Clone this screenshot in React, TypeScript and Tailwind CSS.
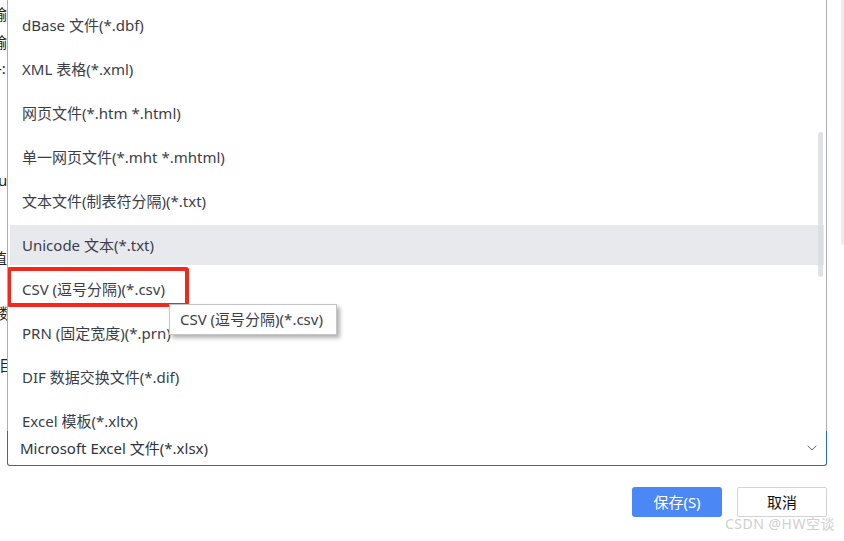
import { ChevronDown } from 'lucide-react';

const fileTypes = [
  'dBase 文件(*.dbf)',
  'XML 表格(*.xml)',
  '网页文件(*.htm *.html)',
  '单一网页文件(*.mht *.mhtml)',
  '文本文件(制表符分隔)(*.txt)',
  'Unicode 文本(*.txt)',
  'CSV (逗号分隔)(*.csv)',
  'PRN (固定宽度)(*.prn)',
  'DIF 数据交换文件(*.dif)',
  'Excel 模板(*.xltx)',
];

const font = "font-['Noto_Sans','Noto_Sans_CJK_SC',sans-serif]";

export default function App() {
  const hovered = 5;
  const selected = 6;

  return (
    <div className={`relative flex h-[541px] w-[844px] overflow-hidden bg-white ${font}`}>
      {/* dialog text peeking out behind the dropdown */}
      <div className="flex w-[7px] shrink-0 flex-col overflow-hidden text-[15px] leading-[20px] text-[#222]">
        <div className="ml-[-8px] mt-[4px] whitespace-nowrap">输</div>
        <div className="ml-[-8px] mt-[8px] whitespace-nowrap">输</div>
        <div className="ml-[-3px] mt-[6px] whitespace-nowrap">-:</div>
        <div className="ml-[-2px] mt-[92px] whitespace-nowrap">u</div>
        <div className="ml-[-8px] mt-[58px] whitespace-nowrap">值</div>
        <div className="ml-[-1px] mt-[35px] whitespace-nowrap">数</div>
        <div className="ml-[-1px] mt-[32px] whitespace-nowrap">目</div>
      </div>

      <div className="flex w-[820px] shrink-0 flex-col">
        {/* dropdown list */}
        <div className="relative h-[431px] overflow-hidden border-x border-[#aeabbb] px-[2px]">
          <div className="flex flex-col gap-[4px] pt-[5px]">
            {fileTypes.map((t, i) => (
              <div
                key={t}
                className={`relative flex h-[40px] shrink-0 items-center pl-[12px] text-[15px] text-[#3a3e4b] ${
                  i === hovered ? 'bg-[#e7e9ed]' : ''
                }`}
              >
                {t}
                {i === selected && (
                  <div className="pointer-events-none absolute left-[-3px] top-[-2px] h-[40px] w-[182px] rounded-[3px] border-[4px] border-[#f5261c]" />
                )}
              </div>
            ))}
          </div>
          {/* scrollbar thumb */}
          <div className="absolute right-[3px] top-[132px] h-[145px] w-[5px] rounded-full bg-[#d9dbe0]/80" />
        </div>

        {/* select box */}
        <div className="flex h-[35px] items-center justify-between rounded-b-[3px] border-x border-b border-[#2f67c4] pl-[12px] pr-[6px] text-[15px] text-[#2f3340]">
          <span>Microsoft Excel 文件(*.xlsx)</span>
          <ChevronDown className="h-[16px] w-[16px] text-[#5a5e6a]" strokeWidth={1.5} />
        </div>

        <div className="mt-[21px] flex justify-end gap-[15px]">
          <button className="h-[30px] w-[90px] rounded-[3px] bg-[#4b87f5] text-[15px] text-white">保存(S)</button>
          <button className="h-[30px] w-[90px] rounded-[2px] border border-[#d3d3d6] bg-white text-[15px] text-[#111]">取消</button>
        </div>
      </div>

      {/* right strip with the dialog scrollbar */}
      <div className="flex flex-1 justify-end">
        <div className="h-[245px] w-[3px] rounded-b-[2px] bg-[#ececee]" />
      </div>

      {/* tooltip */}
      <div className="absolute left-[169px] top-[304px] flex h-[31px] w-[168px] items-center border border-[#c4c4c4] bg-white pl-[10px] text-[15px] text-[#3a3e4b] shadow-[3px_3px_4px_rgba(0,0,0,0.3)]">
        CSV (逗号分隔)(*.csv)
      </div>

      {/* watermark */}
      <div className="absolute left-[725px] top-[515px] text-[14px] leading-[18px] tracking-[0.5px] text-[#cfcfcf] [text-shadow:0_0_1px_#fff]">
        CSDN @HW空谈
      </div>
    </div>
  );
}
